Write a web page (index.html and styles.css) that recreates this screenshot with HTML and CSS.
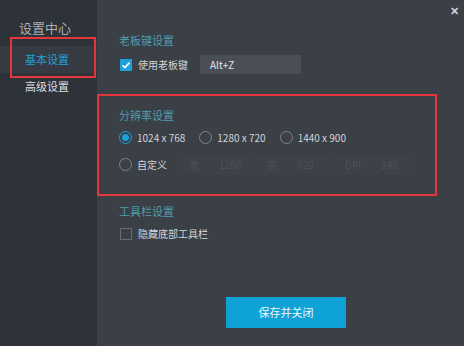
FILE: index.html
```html
<!DOCTYPE html>
<html lang="zh-CN">
<head>
    <meta charset="UTF-8">
    <title>设置中心</title>
    <link rel="stylesheet" href="styles.css">
</head>
<body>
    <div class="dialog">
        <!-- 左侧菜单 -->
        <div class="side">
            <div class="side-title">设置中心</div>
            <ul class="menu">
                <li class="current">基本设置</li>
                <li>高级设置</li>
            </ul>
            <div class="mark mark-menu"></div>
        </div>
        <!-- 右侧内容 -->
        <div class="main">
            <span class="close">&#10005;</span>

            <div class="group">
                <div class="group-title">老板键设置</div>
                <div class="row">
                    <label class="check on"><i></i>使用老板键</label>
                    <div class="key">Alt+Z</div>
                </div>
            </div>

            <div class="group group-res">
                <div class="group-title">分辨率设置</div>
                <div class="row">
                    <label class="radio on"><i></i>1024 x 768</label>
                    <label class="radio"><i></i>1280 x 720</label>
                    <label class="radio"><i></i>1440 x 900</label>
                </div>
                <div class="row row-custom">
                    <label class="radio"><i></i>自定义</label>
                    <div class="field"><span>宽</span><em>1280</em></div>
                    <div class="field"><span>高</span><em>720</em></div>
                    <div class="field"><span>DPI</span><em>240</em></div>
                </div>
            </div>

            <div class="group group-bar">
                <div class="group-title">工具栏设置</div>
                <div class="row">
                    <label class="check"><i></i>隐藏底部工具栏</label>
                </div>
            </div>

            <div class="btn">保存并关闭</div>
        </div>
    </div>
</body>
</html>
```

FILE: styles.css
```css
*{
    margin: 0;
    padding: 0;
    border: 0;
    list-style: none;
    box-sizing: border-box;
}
body{
    font-family: "Noto Sans CJK SC", "Noto Sans", sans-serif;
    background: #3b3f46;
}
.dialog{
    width: 464px;
    height: 346px;
    display: flex;
    background: #3b3f46;
}
.side{
    width: 97px;
    background: #2e333a;
    position: relative;
    padding-top: 19px;
}
.side-title{
    padding-left: 19px;
    font-size: 13px;
    line-height: 18px;
    color: #a9aeb5;
}
.menu{
    margin-top: 9px;
}
.menu li{
    height: 27px;
    line-height: 27px;
    padding-left: 25px;
    font-size: 11px;
    color: #dcdfe3;
}
.menu li.current{
    background: #363b43;
    color: #1ea0d5;
}
.mark{
    position: absolute;
    border: 2px solid #e3373c;
}
.mark-menu{
    left: 10px;
    top: 37px;
    width: 86px;
    height: 41px;
}
.main{
    flex: 1;
    position: relative;
}
.close{
    position: absolute;
    right: 5px;
    top: 2px;
    font-size: 11px;
    font-weight: bold;
    color: #cfd2d6;
}
.group{
    padding: 33px 0 0 22px;
}
.group-title{
    font-size: 11px;
    line-height: 14px;
    color: #4f9db0;
}
.row{
    display: flex;
    align-items: center;
    height: 19px;
    margin-top: 8px;
    font-size: 10px;
    color: #d2d5d9;
}
.check, .radio{
    display: flex;
    align-items: center;
    white-space: nowrap;
}
.check i{
    width: 12px;
    height: 12px;
    margin: 0 6px 0 1px;
    border: 1px solid #666b72;
}
.check.on i{
    border: 0;
    background: #1ea0d8 url("data:image/svg+xml,%3Csvg xmlns='http://www.w3.org/2000/svg' viewBox='0 0 12 12'%3E%3Cpath d='M2.5 6.2l2.4 2.4 4.6-5' fill='none' stroke='%23fff' stroke-width='1.6'/%3E%3C/svg%3E") no-repeat center;
}
.key{
    margin-left: 12px;
    width: 101px;
    height: 19px;
    line-height: 19px;
    padding-left: 10px;
    background: #4a4e56;
    font-size: 10px;
    color: #e6e8ea;
}
.group-res{
    margin: 20px 27px 0 0;
    padding: 12px 0 20px 20px;
    border: 2px solid #e3373c;
}
.group-res .row{
    margin-top: 6px;
}
.group-res .row-custom{
    margin-top: 8px;
}
.radio{
    margin-right: 14px;
}
.radio i{
    width: 13px;
    height: 13px;
    border-radius: 50%;
    border: 1px solid #80858c;
    margin-right: 5px;
    display: flex;
    align-items: center;
    justify-content: center;
}
.radio.on i{
    border-color: #1ea0d8;
}
.radio.on i::after{
    content: "";
    width: 7px;
    height: 7px;
    border-radius: 50%;
    background: #1ea0d8;
}
.row-custom .radio{
    margin-right: 11px;
}
.field{
    width: 76px;
    height: 18px;
    margin-right: 2px;
    display: flex;
    align-items: center;
    padding-left: 11px;
    background: #3d4148;
    color: #4c5159;
    font-size: 10px;
}
.field em{
    font-style: normal;
    margin-left: 20px;
}
.group-bar{
    padding-top: 8px;
}
.group-bar .row{
    margin-top: 6px;
}
.btn{
    margin: 54px 0 0 129px;
    width: 120px;
    height: 31px;
    line-height: 31px;
    text-align: center;
    background: #0ea2d6;
    color: #f2f8fb;
    font-size: 11px;
}
```
